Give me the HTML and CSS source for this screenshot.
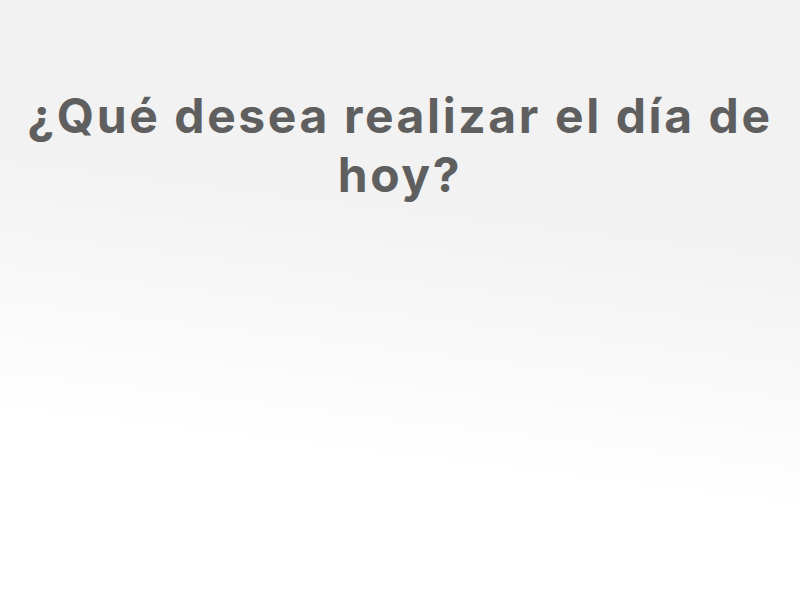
FILE: index.html
```html
<!DOCTYPE html>
<html lang="es">
<head>
<meta charset="utf-8">
<link rel="stylesheet" href="styles.css">
</head>
<body>
<main class="page">
  <h1 class="title">¿Qué desea realizar el día de hoy?</h1>
</main>
</body>
</html>
```
FILE: styles.css
```css
html, body {
  margin: 0;
  padding: 0;
  height: 100%;
}
body {
  background: linear-gradient(187deg, #f2f2f2 0%, #f2f2f2 36%, #ffffff 73%, #ffffff 100%);
  font-family: "Inter", "Noto Sans", sans-serif;
}
.page {
  min-height: 600px;
  padding: 86px 10px 0;
  box-sizing: border-box;
}
.title {
  margin: 0;
  text-align: center;
  color: #5f5f5f;
  font-size: 48px;
  line-height: 59px;
  font-weight: 700;
  letter-spacing: 2.6px;
}
```
